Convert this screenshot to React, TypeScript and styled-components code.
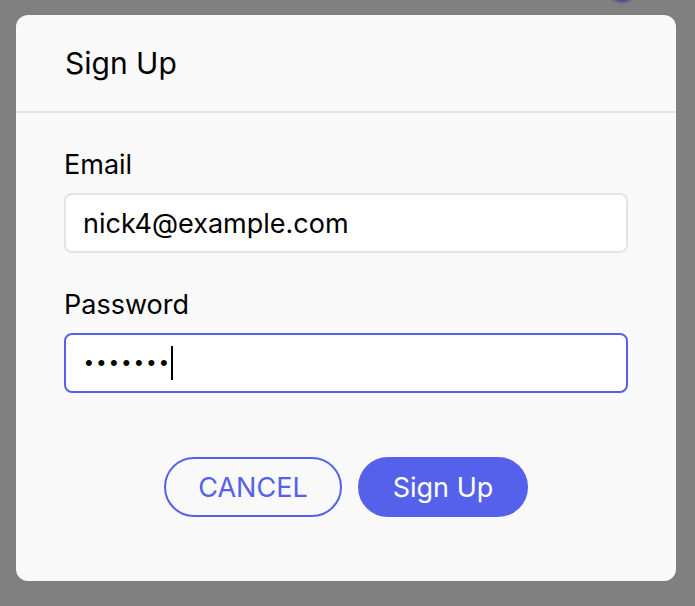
import React, { useState } from 'react';
import styled, { createGlobalStyle } from 'styled-components';

const GlobalStyle = createGlobalStyle`
  html, body {
    margin: 0;
    padding: 0;
    background: #808080;
  }
  body {
    font-family: Inter, "Noto Sans", sans-serif;
    -webkit-font-smoothing: antialiased;
  }
`;

const Backdrop = styled.div`
  position: relative;
  height: 606px;
  padding: 15px 19px 0 16px;
  box-sizing: border-box;
  overflow: hidden;
`;

const Avatar = styled.div`
  position: absolute;
  top: -28px;
  left: 607px;
  width: 30px;
  height: 30px;
  border-radius: 50%;
  background: #3a3f8c;
  filter: blur(1.5px);
`;

const Modal = styled.div`
  position: relative;
  width: 660px;
  height: 566px;
  background: #f9f9f9;
  border-radius: 12px;
  display: flex;
  flex-direction: column;
`;

const Header = styled.div`
  height: 96px;
  display: flex;
  align-items: center;
  padding: 0 49px;
  border-bottom: 2px solid #e4e4e7;
`;

const Title = styled.h2`
  margin: 0;
  font-size: 30px;
  line-height: 36px;
  font-weight: 400;
  color: #000;
`;

const Body = styled.div`
  padding: 36px 48px 0;
  display: flex;
  flex-direction: column;
`;

const Field = styled.div`
  display: flex;
  flex-direction: column;
  gap: 12px;
  margin-bottom: 36px;
`;

const Label = styled.label`
  font-size: 27px;
  line-height: 32px;
  color: #000;
`;

const InputWrap = styled.div`
  position: relative;
  display: flex;
`;

const Input = styled.input<{ $focused?: boolean }>`
  flex: 1;
  height: 60px;
  box-sizing: border-box;
  border: 2px solid ${({ $focused }) => ($focused ? '#5561ea' : '#e3e3e8')};
  border-radius: 8px;
  background: #fff;
  padding: 0 17px;
  font-family: Inter, "Noto Sans", sans-serif;
  font-size: 27px;
  color: #000;
  outline: none;
  caret-color: transparent;

  &[type='password'] {
    font-family: "Liberation Sans", Arial, sans-serif;
    font-size: 22px;
    letter-spacing: 4.8px;
    padding-left: 19px;
  }
`;

const Caret = styled.span`
  position: absolute;
  left: 107px;
  top: 13px;
  width: 2px;
  height: 34px;
  background: #000;
`;

const Actions = styled.div`
  display: flex;
  justify-content: center;
  gap: 16px;
  margin-top: 28px;
`;

const PillButton = styled.button<{ $primary?: boolean }>`
  height: 60px;
  min-width: ${({ $primary }) => ($primary ? '170px' : '178px')};
  border-radius: 30px;
  box-sizing: border-box;
  border: 2px solid #5561ea;
  background: ${({ $primary }) => ($primary ? '#5561ea' : 'transparent')};
  color: ${({ $primary }) => ($primary ? '#fff' : '#5561ea')};
  font-family: Inter, "Noto Sans", sans-serif;
  font-size: 27px;
  padding: 0 20px;
  cursor: pointer;
`;

const App: React.FC = () => {
  const [email, setEmail] = useState('nick4@example.com');
  const [password, setPassword] = useState('1234567');

  return (
    <>
      <GlobalStyle />
      <Backdrop>
        <Avatar />
        <Modal>
          <Header>
            <Title>Sign Up</Title>
          </Header>
          <Body>
            <Field>
              <Label>Email</Label>
              <InputWrap>
                <Input value={email} onChange={(e) => setEmail(e.target.value)} />
              </InputWrap>
            </Field>
            <Field>
              <Label>Password</Label>
              <InputWrap>
                <Input
                  type="password"
                  $focused
                  value={password}
                  onChange={(e) => setPassword(e.target.value)}
                />
                <Caret />
              </InputWrap>
            </Field>
            <Actions>
              <PillButton>CANCEL</PillButton>
              <PillButton $primary>Sign Up</PillButton>
            </Actions>
          </Body>
        </Modal>
      </Backdrop>
    </>
  );
};

export default App;
